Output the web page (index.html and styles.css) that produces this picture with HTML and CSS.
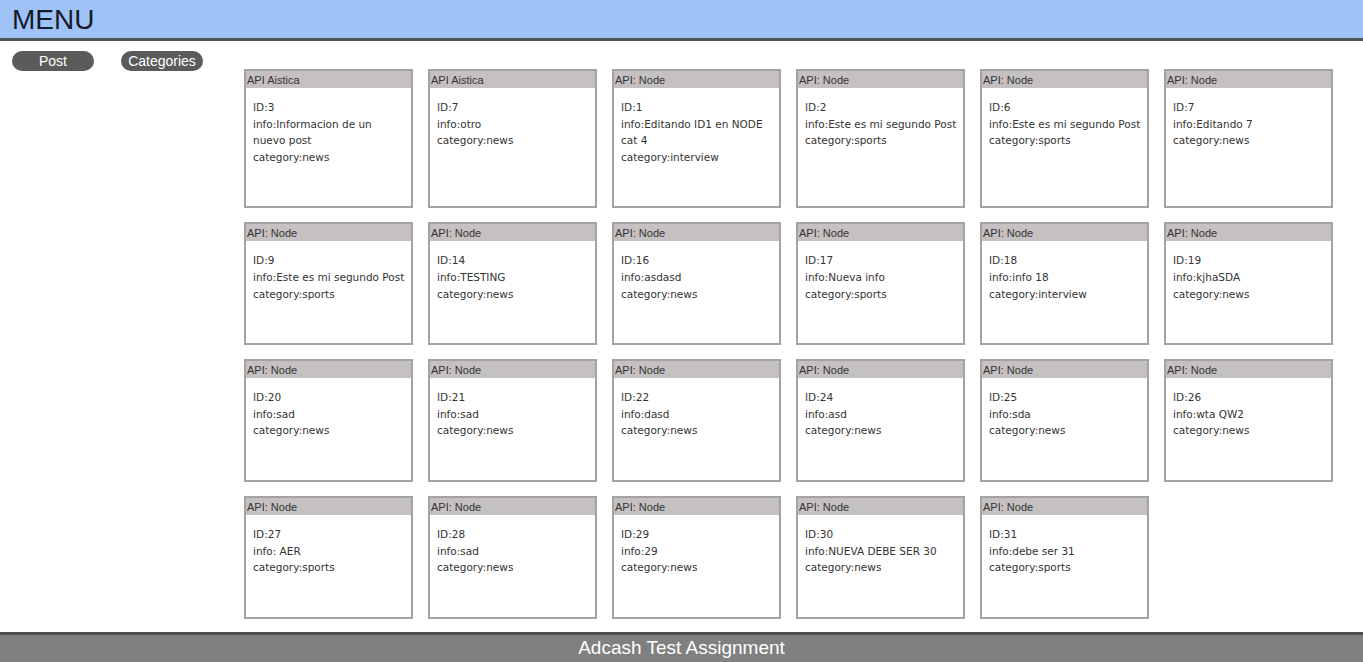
FILE: index.html
```html
<!DOCTYPE html>
<html>
<head>
    <title>Adcash Test Assignment</title>
    <link rel="stylesheet" href="styles.css">
</head>
<body>
    <header class="topbar">
        <h1>MENU</h1>
    </header>

    <div class="layout">
        <nav class="sidebar">
            <button class="pill">Post</button>
            <button class="pill">Categories</button>
        </nav>

        <main class="posts">
            <div class="post"><div class="post-api">API Aistica</div><div class="post-body">ID:3<br>info:Informacion de un nuevo post<br>category:news</div></div>
            <div class="post"><div class="post-api">API Aistica</div><div class="post-body">ID:7<br>info:otro<br>category:news</div></div>
            <div class="post"><div class="post-api">API: Node</div><div class="post-body">ID:1<br>info:Editando ID1 en NODE cat 4<br>category:interview</div></div>
            <div class="post"><div class="post-api">API: Node</div><div class="post-body">ID:2<br>info:Este es mi segundo Post<br>category:sports</div></div>
            <div class="post"><div class="post-api">API: Node</div><div class="post-body">ID:6<br>info:Este es mi segundo Post<br>category:sports</div></div>
            <div class="post"><div class="post-api">API: Node</div><div class="post-body">ID:7<br>info:Editando 7<br>category:news</div></div>

            <div class="post"><div class="post-api">API: Node</div><div class="post-body">ID:9<br>info:Este es mi segundo Post<br>category:sports</div></div>
            <div class="post"><div class="post-api">API: Node</div><div class="post-body">ID:14<br>info:TESTING<br>category:news</div></div>
            <div class="post"><div class="post-api">API: Node</div><div class="post-body">ID:16<br>info:asdasd<br>category:news</div></div>
            <div class="post"><div class="post-api">API: Node</div><div class="post-body">ID:17<br>info:Nueva info<br>category:sports</div></div>
            <div class="post"><div class="post-api">API: Node</div><div class="post-body">ID:18<br>info:info 18<br>category:interview</div></div>
            <div class="post"><div class="post-api">API: Node</div><div class="post-body">ID:19<br>info:kjhaSDA<br>category:news</div></div>

            <div class="post"><div class="post-api">API: Node</div><div class="post-body">ID:20<br>info:sad<br>category:news</div></div>
            <div class="post"><div class="post-api">API: Node</div><div class="post-body">ID:21<br>info:sad<br>category:news</div></div>
            <div class="post"><div class="post-api">API: Node</div><div class="post-body">ID:22<br>info:dasd<br>category:news</div></div>
            <div class="post"><div class="post-api">API: Node</div><div class="post-body">ID:24<br>info:asd<br>category:news</div></div>
            <div class="post"><div class="post-api">API: Node</div><div class="post-body">ID:25<br>info:sda<br>category:news</div></div>
            <div class="post"><div class="post-api">API: Node</div><div class="post-body">ID:26<br>info:wta QW2<br>category:news</div></div>

            <div class="post"><div class="post-api">API: Node</div><div class="post-body">ID:27<br>info: AER<br>category:sports</div></div>
            <div class="post"><div class="post-api">API: Node</div><div class="post-body">ID:28<br>info:sad<br>category:news</div></div>
            <div class="post"><div class="post-api">API: Node</div><div class="post-body">ID:29<br>info:29<br>category:news</div></div>
            <div class="post"><div class="post-api">API: Node</div><div class="post-body">ID:30<br>info:NUEVA DEBE SER 30<br>category:news</div></div>
            <div class="post"><div class="post-api">API: Node</div><div class="post-body">ID:31<br>info:debe ser 31<br>category:sports</div></div>
        </main>
    </div>

    <footer class="footer">Adcash Test Assignment</footer>
</body>
</html>
```

FILE: styles.css
```css
body { margin: 0; font-family: "Liberation Sans", Arial, sans-serif; background: #fff; }

.topbar { background: #a0c3f7; border-bottom: 3px solid #4f5257; height: 38px; }
.topbar h1 { margin: 0; padding-left: 12px; font-size: 28px; font-weight: normal; line-height: 40px; color: #151a2a; }

.layout { display: flex; }
.sidebar { width: 244px; flex-shrink: 0; display: flex; align-items: flex-start; gap: 27px; padding: 10px 0 0 12px; box-sizing: border-box; }
.pill { width: 82px; height: 20px; padding: 0; border: none; border-radius: 10px; background: #5b5b5b; color: #fff; font-family: "Liberation Sans", Arial, sans-serif; font-size: 14px; }

.posts { display: grid; grid-template-columns: repeat(6, 169px); column-gap: 15px; row-gap: 14px; align-content: start; padding-top: 28px; }
.post { border: 2px solid #a3a3a3; box-sizing: border-box; background: #fff; }
.post-api { background: #c5c1c1; height: 17px; line-height: 18px; padding-left: 1px; font-size: 11px; color: #333; }
.post-body { padding: 11px 4px 41px 7px; font-family: "DejaVu Sans", Verdana, sans-serif; font-size: 10.5px; line-height: 16.6px; color: #333; }

.footer { margin-top: 13px; background: #808080; border-top: 3px solid #4f4f4f; height: 27px; line-height: 26px; text-align: center; color: #fff; font-size: 19px; }
```
